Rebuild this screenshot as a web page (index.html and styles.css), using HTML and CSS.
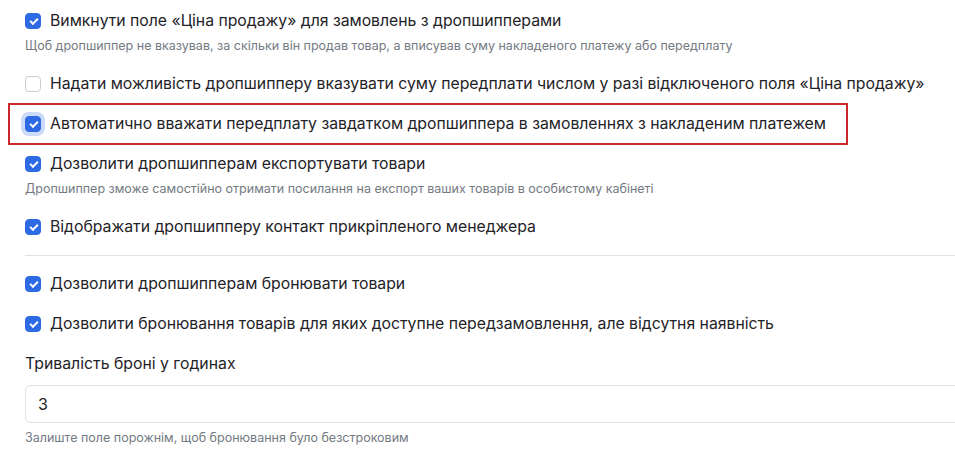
FILE: index.html
```html
<!DOCTYPE html>
<html lang="uk">
<head>
    <meta charset="UTF-8">
    <meta name="viewport" content="width=device-width, initial-scale=1.0">
    <title>Налаштування дропшипінгу</title>
    <link rel="stylesheet" href="styles.css">
</head>
<body>

<div class="settings">
    <div class="setting">
        <label class="check-row">
            <input type="checkbox" class="check" checked>
            <span>Вимкнути поле «Ціна продажу» для замовлень з дропшипперами</span>
        </label>
        <div class="hint">Щоб дропшиппер не вказував, за скільки він продав товар, а вписував суму накладеного платежу або передплату</div>
    </div>

    <div class="setting">
        <label class="check-row">
            <input type="checkbox" class="check">
            <span>Надати можливість дропшипперу вказувати суму передплати числом у разі відключеного поля «Ціна продажу»</span>
        </label>
    </div>

    <div class="setting">
        <label class="check-row highlighted">
            <input type="checkbox" class="check focused" checked>
            <span>Автоматично вважати передплату завдатком дропшиппера в замовленнях з накладеним платежем</span>
        </label>
    </div>

    <div class="setting">
        <label class="check-row">
            <input type="checkbox" class="check" checked>
            <span>Дозволити дропшипперам експортувати товари</span>
        </label>
        <div class="hint">Дропшиппер зможе самостійно отримати посилання на експорт ваших товарів в особистому кабінеті</div>
    </div>

    <div class="setting">
        <label class="check-row">
            <input type="checkbox" class="check" checked>
            <span>Відображати дропшипперу контакт прикріпленого менеджера</span>
        </label>
    </div>

    <hr class="divider">

    <div class="setting">
        <label class="check-row">
            <input type="checkbox" class="check" checked>
            <span>Дозволити дропшипперам бронювати товари</span>
        </label>
    </div>

    <div class="setting">
        <label class="check-row">
            <input type="checkbox" class="check" checked>
            <span>Дозволити бронювання товарів для яких доступне передзамовлення, але відсутня наявність</span>
        </label>
    </div>

    <div class="setting">
        <label class="field-label" for="reserve-hours">Тривалість броні у годинах</label>
        <input type="text" id="reserve-hours" class="field" value="3">
        <div class="hint small-gap">Залиште поле порожнім, щоб бронювання було безстроковим</div>
    </div>
</div>

</body>
</html>
```

FILE: styles.css
```css
body {
    font-family: Inter, "Noto Sans", sans-serif;
    margin: 0;
    background-color: #ffffff;
    color: #1f2328;
    overflow: hidden;
}
.settings {
    padding: 9px 0 0 25px;
    width: 940px;
}
.setting {
    margin-bottom: 16px;
}
.check-row {
    display: flex;
    align-items: center;
    font-size: 15.8px;
    line-height: 24px;
    letter-spacing: -0.02px;
    cursor: pointer;
    position: relative;
}
.check-row span {
    margin-left: 9px;
    white-space: nowrap;
}
.highlighted::after {
    content: "";
    position: absolute;
    left: -17px;
    top: -9px;
    width: 836px;
    height: 38px;
    border: 2px solid #c9262b;
    pointer-events: none;
}
.check {
    appearance: none;
    -webkit-appearance: none;
    margin: 0;
    width: 16px;
    height: 16px;
    flex-shrink: 0;
    border: 1px solid #c8ccd2;
    border-radius: 4px;
    background-color: #ffffff;
    position: relative;
}
.check:checked {
    background-color: #2d6ae3;
    border-color: #2d6ae3;
}
.check:checked::after {
    content: "";
    position: absolute;
    left: 4px;
    top: 4px;
    width: 6px;
    height: 3px;
    border-left: 2px solid #ffffff;
    border-bottom: 2px solid #ffffff;
    transform: rotate(-45deg);
}
.focused {
    box-shadow: 0 0 0 4px rgba(45, 106, 227, 0.25);
}
.hint {
    margin-top: 3px;
    font-size: 12.5px;
    line-height: 20px;
    color: #737a82;
    white-space: nowrap;
}
.small-gap {
    margin-top: 5px;
}
.divider {
    border: none;
    border-top: 1px solid #dee2e6;
    margin: 0 -20px 16px 0;
}
.field-label {
    display: block;
    font-size: 15.8px;
    line-height: 24px;
    margin-bottom: 9px;
    margin-top: 1px;
}
.field {
    display: block;
    box-sizing: border-box;
    width: 960px;
    height: 38px;
    padding: 0 12px;
    font-family: inherit;
    font-size: 16px;
    color: #1f2328;
    border: 1px solid #dee2e6;
    border-radius: 6px;
    outline: none;
}
```
